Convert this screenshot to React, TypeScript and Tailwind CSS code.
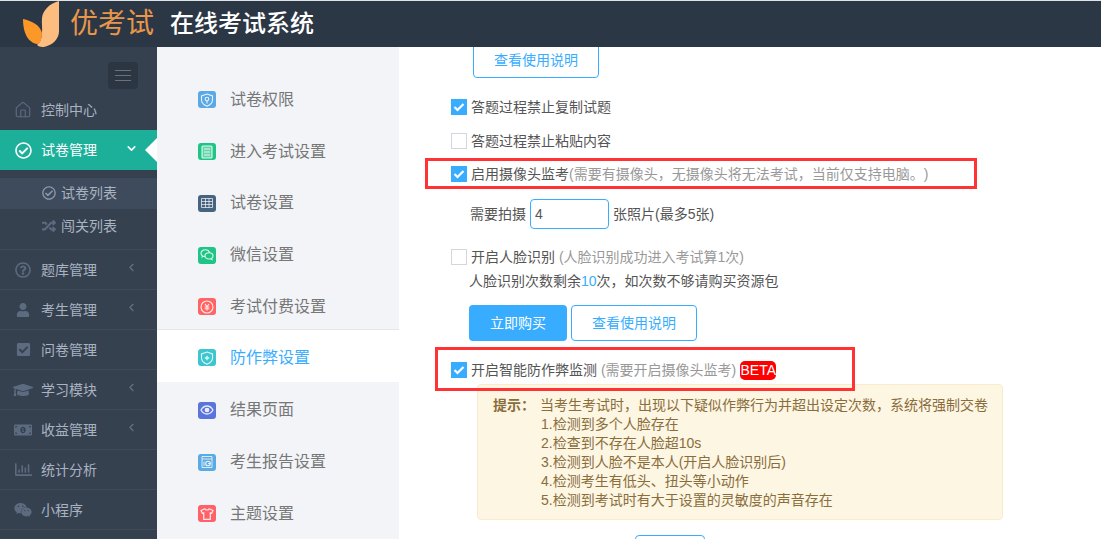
import { ReactNode } from 'react';
import { ChevronDown, ChevronLeft, House } from 'lucide-react';
import {
  FaCheckSquare,
  FaGraduationCap,
  FaMoneyBillAlt,
  FaRandom,
  FaRegChartBar,
  FaRegCheckCircle,
  FaRegQuestionCircle,
  FaUser,
  FaWeixin,
} from 'react-icons/fa';

const font = 'font-["Liberation_Sans","Noto_Sans_CJK_SC",sans-serif]';

function Logo() {
  return (
    <svg width="37" height="46" viewBox="0 0 37 46" className="shrink-0">
      <path d="M36 0C26 3 20 9 19 17C18.500 22 19.500 27 19 32C18.800 37 17 42 14 44C16 46 19 46 21 46C30 44 36 38 36 30Z" fill="#fdbd80" />
      <path d="M0 18C9 20 17 24 19 32C19 37 18 40 15.500 43C8 43 0 36 0 18Z" fill="#fb9827" />
    </svg>
  );
}

// Small glyphs of the settings tabs, all on a 14x14 box
function Glyph({ children }: { children: ReactNode }) {
  return (
    <svg width="14" height="14" viewBox="0 0 14 14" fill="none" stroke="currentColor" strokeWidth="1.100">
      {children}
    </svg>
  );
}

function SideItem({
  icon,
  label,
  arrow = false,
}: {
  icon: ReactNode;
  label: string;
  arrow?: boolean;
}) {
  return (
    <div className="flex h-10 items-center border-b border-[#3f4b5b] text-sm text-[#a9b3c1]">
      <span className="flex w-[41px] shrink-0 items-center justify-center pl-[5px] text-[#5c6b80]">{icon}</span>
      <span className="flex-1">{label}</span>
      {arrow && <ChevronLeft size={13} className="mr-[19px] mb-1 text-[#66727f]" />}
    </div>
  );
}

function SubNav({
  bg,
  icon,
  label,
  active = false,
}: {
  bg: string;
  icon: ReactNode;
  label: string;
  active?: boolean;
}) {
  return (
    <div
      className={`flex h-[51.75px] items-center pl-[41px] text-base ${
        active ? '-mt-[3px] mb-[3px] bg-white pt-1 text-[#38adff] shadow-[0_-1px_0_#e4e5ea]' : 'text-[#777]'
      }`}
    >
      <span className={`flex h-[17px] w-[18px] items-center justify-center rounded-[3px] text-white/85 ${bg}`}>{icon}</span>
      <span className="ml-[14px]">{label}</span>
    </div>
  );
}

function Check({ on = false }: { on?: boolean }) {
  return on ? (
    <span className="flex h-4 w-4 shrink-0 items-center justify-center bg-[#38adff]">
      <svg width="12" height="10" viewBox="0 0 12 10">
        <path d="M1.500 5L4.500 8L10.500 2" fill="none" stroke="#fff" strokeWidth="2.200" />
      </svg>
    </span>
  ) : (
    <span className="h-4 w-4 shrink-0 border border-[#d3d6da] bg-white" />
  );
}

export default function App() {
  return (
    <div className={`relative flex h-[539px] w-[1101px] flex-col overflow-hidden bg-white [text-spacing-trim:space-all] ${font}`}>
      {/* Top bar */}
      <header className="z-10 flex h-[47px] shrink-0 items-center border-t border-[#dfe2e6] bg-[#2c3745] pl-[23px]">
        <Logo />
        <span className="ml-[10px] text-[28px] text-[#e8964a]">优考试</span>
        <span className="ml-4 text-2xl font-medium text-white">在线考试系统</span>
      </header>

      <div className="flex min-h-0 flex-1">
        {/* Left menu */}
        <aside className="relative w-[157px] shrink-0 bg-[#364150]">
          <div className="flex h-[43px] items-start justify-end pt-[15px] pr-[19px]">
            <div className="flex h-[27px] w-[30px] flex-col items-center justify-center gap-1 rounded bg-[#2c3542]">
              <span className="h-px w-4 bg-[#67717f]" />
              <span className="h-px w-4 bg-[#67717f]" />
              <span className="h-px w-4 bg-[#67717f]" />
            </div>
          </div>
          <div className="flex h-10 items-center text-sm text-[#a9b3c1]">
            <span className="flex w-[41px] items-center justify-center pl-[5px] text-[#5c6b80]">
              <House size={18} strokeWidth={1.500} />
            </span>
            控制中心
          </div>
          <div className="relative flex h-10 items-center bg-[#1cb09a] text-sm text-white">
            <span className="flex w-[41px] items-center justify-center pl-[5px]">
              <FaRegCheckCircle size={17} />
            </span>
            <span className="flex-1">试卷管理</span>
            <ChevronDown size={13} strokeWidth={3} className="mr-[19px] mb-1" />
            <span className="absolute top-[8px] right-0 h-0 w-0 border-y-[12px] border-r-[12px] border-y-transparent border-r-white" />
          </div>
          <div className="h-20 border-b border-[#3f4b5b] pt-2 text-sm text-[#a9b3c1]">
            <div className="flex h-[31px] items-center bg-[#3e4b5c] pb-px pl-[42px]">
              <FaRegCheckCircle size={14} className="mr-[5px] text-[#8e9aab]" />
              试卷列表
            </div>
            <div className="mt-px flex h-[31px] items-center pl-[42px]">
              <FaRandom size={14} className="mr-[5px] text-[#5c6b80]" />
              闯关列表
            </div>
          </div>
          <SideItem icon={<FaRegQuestionCircle size={16} />} label="题库管理" arrow />
          <SideItem icon={<FaUser size={14} />} label="考生管理" arrow />
          <SideItem icon={<FaCheckSquare size={15} />} label="问卷管理" />
          <SideItem icon={<FaGraduationCap size={20} />} label="学习模块" arrow />
          <SideItem icon={<FaMoneyBillAlt size={18} />} label="收益管理" arrow />
          <SideItem icon={<FaRegChartBar size={17} />} label="统计分析" />
          <SideItem icon={<FaWeixin size={18} />} label="小程序" />
        </aside>

        {/* Settings tabs */}
        <nav className="w-[242px] shrink-0 bg-[#f2f4f8] pt-[27px]">
          <SubNav
            bg="bg-[#5aa9e6]"
            label="试卷权限"
            icon={
              <Glyph>
                <path d="M7 1L12.500 3V7C12.500 10 10 12 7 13.300C4 12 1.500 10 1.500 7V3Z" />
                <circle cx="7" cy="6" r="1.800" />
                <path d="M7 7.800V10.500" />
              </Glyph>
            }
          />
          <SubNav
            bg="bg-[#1fc586]"
            label="进入考试设置"
            icon={
              <Glyph>
                <rect x="2" y="1" width="10" height="12" rx="1" fill="currentColor" fillOpacity=".35" />
                <path d="M4 4H10M4 7H10M4 10H10" />
              </Glyph>
            }
          />
          <SubNav
            bg="bg-[#46637f]"
            label="试卷设置"
            icon={
              <Glyph>
                <path d="M1.500 2.500H12.500V11.500H1.500ZM5.500 2.500V11.500M9 2.500V11.500M1.500 5.500H12.500M1.500 8.500H12.500" strokeWidth=".8" />
              </Glyph>
            }
          />
          <SubNav
            bg="bg-[#1fc586]"
            label="微信设置"
            icon={
              <Glyph>
                <path d="M9.500 4.500C9 2.700 7.300 1.700 5.300 1.700C3 1.700 1 3.200 1 5.200C1 6.300 1.600 7.200 2.500 7.800L2.200 9L3.500 8.300C4 8.500 4.500 8.600 5 8.600" />
                <path d="M9 4.800C11.200 4.800 13 6.200 13 8C13 9 12.400 9.800 11.700 10.300L12 11.500L10.600 10.800C10.200 10.900 9.600 11 9 11C6.800 11 5 9.600 5 8C5 6.200 6.800 4.800 9 4.800Z" />
              </Glyph>
            }
          />
          <SubNav
            bg="bg-[#ff6464]"
            label="考试付费设置"
            icon={
              <Glyph>
                <circle cx="7" cy="7" r="6" />
                <path d="M5 4L7 6.500L9 4M7 6.500V10.500M4.700 7H9.300M4.700 8.800H9.300" />
              </Glyph>
            }
          />
          <SubNav
            bg="bg-[#3cc6cf]"
            label="防作弊设置"
            active
            icon={
              <Glyph>
                <path d="M7 1L12.500 3V7C12.500 10 10 12 7 13.300C4 12 1.500 10 1.500 7V3Z" />
                <path d="M4.800 7H9.200M7 4.800V9.200" strokeWidth="1.300" />
              </Glyph>
            }
          />
          <SubNav
            bg="bg-[#5a74dc]"
            label="结果页面"
            icon={
              <Glyph>
                <path d="M1 7C2.500 4.400 4.600 3 7 3C9.400 3 11.500 4.400 13 7C11.500 9.600 9.400 11 7 11C4.600 11 2.500 9.600 1 7Z" strokeWidth="1.300" />
                <circle cx="7" cy="7" r="1.800" fill="currentColor" />
              </Glyph>
            }
          />
          <SubNav
            bg="bg-[#5aaae4]"
            label="考生报告设置"
            icon={
              <Glyph>
                <path d="M2 1.500H12V12.500H2ZM2 4H12" strokeWidth=".9" />
                <circle cx="8" cy="8.500" r="2.300" />
                <path d="M4 6.500V11M8 8.500H10.300" strokeWidth=".9" />
              </Glyph>
            }
          />
          <SubNav
            bg="bg-[#ff6168]"
            label="主题设置"
            icon={
              <Glyph>
                <path d="M4.800 1.800L1 3.500L2.300 6.300L3.700 5.800V12.300H10.300V5.800L11.700 6.300L13 3.500L9.200 1.800C8.800 3.300 5.200 3.300 4.800 1.800Z" strokeWidth="1.200" />
              </Glyph>
            }
          />
        </nav>

        {/* Form */}
        <main className="min-w-0 flex-1 overflow-hidden pl-[52px] text-sm text-[#555]">
          <button className="mt-[-5px] ml-[22px] block h-9 w-[126px] rounded border border-[#38adff] bg-white text-[#38adff]">
            查看使用说明
          </button>

          <label className="mt-[19px] flex h-5 items-center gap-1">
            <Check on />
            答题过程禁止复制试题
          </label>
          <label className="mt-[14px] flex h-5 items-center gap-1">
            <Check />
            答题过程禁止粘贴内容
          </label>
          <label className="mt-[13px] flex h-5 items-center gap-1">
            <Check on />
            <span>
              启用摄像头监考<span className="text-[#999]">(需要有摄像头，无摄像头将无法考试，当前仅支持电脑。)</span>
            </span>
          </label>

          <div className="mt-[15px] ml-[19px] flex h-[30px] items-center">
            需要拍摄
            <input
              readOnly
              value="4"
              className="mx-1 h-[30px] w-[79px] rounded border border-[#38adff] px-1 text-sm text-[#555] outline-none"
            />
            张照片(最多5张)
          </div>

          <label className="mt-[18px] flex h-5 items-center gap-1">
            <Check />
            <span>
              开启人脸识别 <span className="text-[#999]">(人脸识别成功进入考试算1次)</span>
            </span>
          </label>
          <p className="mt-1 ml-[18px] h-5 leading-5">
            人脸识别次数剩余<span className="text-[#38adff]">10</span>次，如次数不够请购买资源包
          </p>

          <div className="mt-[14px] ml-[18px] flex gap-1">
            <button className="h-9 w-[98px] rounded bg-[#38adff] text-white">立即购买</button>
            <button className="h-9 w-[126px] rounded border border-[#38adff] bg-white text-[#38adff]">
              查看使用说明
            </button>
          </div>

          <label className="mt-[19px] flex h-5 items-center gap-1">
            <Check on />
            <span>
              开启智能防作弊监测 <span className="text-[#999]">(需要开启摄像头监考)</span>
            </span>
            <span className="w-9 rounded-[5px] bg-[#f00] text-center leading-[19px] text-white">BETA</span>
          </label>

          <div className="mt-1 ml-[26px] flex h-[136px] w-[526px] rounded border border-[#faebcc] bg-[#fcf6e3] pt-[11px] pl-[15px] leading-[19px] text-[#8a6d3b]">
            <b className="w-[47px] shrink-0">提示：</b>
            <div>
              <p>当考生考试时，出现以下疑似作弊行为并超出设定次数，系统将强制交卷</p>
              <p className="pl-px">1.检测到多个人脸存在</p>
              <p className="pl-px">2.检查到不存在人脸超10s</p>
              <p className="pl-px">3.检测到人脸不是本人(开启人脸识别后)</p>
              <p className="pl-px">4.检测考生有低头、扭头等小动作</p>
              <p className="pl-px">5.检测到考试时有大于设置的灵敏度的声音存在</p>
            </div>
          </div>

          <div className="mt-[15px] ml-[184px] h-9 w-[70px] rounded border border-[#38adff]" />
        </main>
      </div>

      {/* Red annotation boxes drawn on top of the screenshot */}
      <div className="absolute top-[158px] left-[425px] h-[31px] w-[552px] border-[3px] border-[#f33]" />
      <div className="absolute top-[347px] left-[435px] h-[44px] w-[420px] border-[3px] border-[#f33]" />
    </div>
  );
}
